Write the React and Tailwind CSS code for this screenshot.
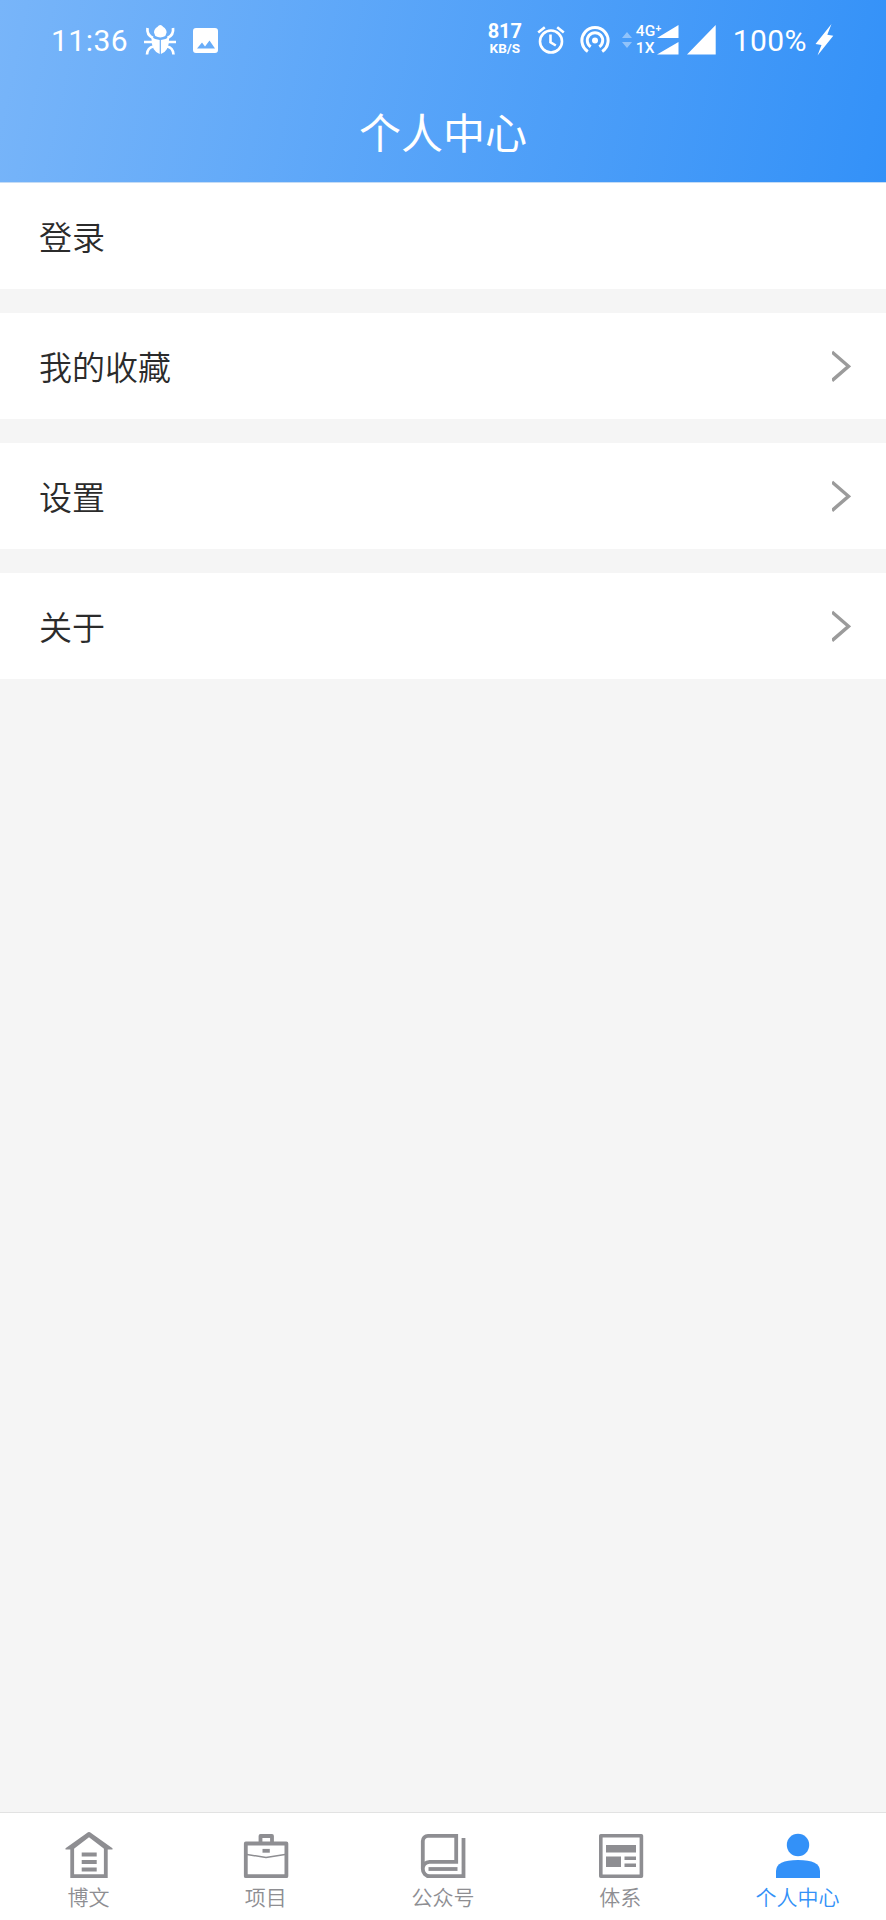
const ROWS = [
  { label: '登录', arrow: false },
  { label: '我的收藏', arrow: true },
  { label: '设置', arrow: true },
  { label: '关于', arrow: true },
]

const TABS = [
  { label: '博文', icon: HomeIcon },
  { label: '项目', icon: CaseIcon },
  { label: '公众号', icon: BookIcon },
  { label: '体系', icon: NewsIcon },
  { label: '个人中心', icon: UserIcon, active: true },
]

export default function App() {
  return (
    <div className="flex h-[1920px] w-[886px] flex-col overflow-hidden bg-[#f5f5f5] font-['Noto_Sans_CJK_SC',sans-serif]">
      <header className="h-[182px] shrink-0 bg-linear-[102deg,#78b5f9,#3391f8] text-white">
        <StatusBar />
        <h1 className="mt-[5px] flex h-[92px] items-center justify-center text-[42px] leading-none">个人中心</h1>
      </header>

      <main className="flex flex-1 flex-col gap-6 border-t border-[#c5dcf5]">
        {ROWS.map((row) => (
          <div key={row.label} className="flex h-[106px] items-center justify-between bg-white pr-[35px] pl-[39px]">
            <span className="pt-px text-[33px] leading-none font-[350] text-[#2b2b2b]">{row.label}</span>
            {row.arrow && <ArrowIcon />}
          </div>
        ))}
      </main>

      <nav className="grid h-[108px] shrink-0 grid-cols-5 border-t border-[#e2e2e2] bg-white">
        {TABS.map((tab) => (
          <Tab key={tab.label} {...tab} />
        ))}
      </nav>
    </div>
  )
}

function Tab({ label, icon: Icon, active }) {
  return (
    <div className={`flex flex-col items-center pt-[19px] ${active ? 'text-[#3391f8]' : 'text-[#8e8e92]'}`}>
      <Icon />
      <span className="mt-[4px] text-[21px] leading-[24px] font-[350]">{label}</span>
    </div>
  )
}

function StatusBar() {
  return (
    <div className="flex h-[80px] items-center justify-between pr-[52px] pl-[51px] font-[Roboto,sans-serif]">
      <div className="flex items-center">
        <span className="w-[93px] pt-[2px] text-[30px] leading-none tracking-[0.5px]">11:36</span>
        <BugIcon />
        <PictureIcon />
      </div>
      <div className="flex items-center">
        <div className="flex w-[36px] flex-col items-center pb-[2px] font-bold">
          <span className="text-[20px] leading-[18px]">817</span>
          <span className="text-[13.5px] leading-[16px]">KB/S</span>
        </div>
        <AlarmIcon />
        <HotspotIcon />
        <DataIcon />
        <div className="flex w-[21px] flex-col text-[15.5px] leading-[17px] font-medium whitespace-nowrap">
          <span>4G⁺</span>
          <span>1X</span>
        </div>
        <SignalIcon />
        <span className="ml-[16px] pt-[2px] text-[30px] leading-none tracking-[0.4px]">100%</span>
        <BoltIcon />
      </div>
    </div>
  )
}

function BugIcon() {
  return (
    <svg className="mr-[1px] h-8 w-8" viewBox="0 0 32 32" fill="currentColor">
      <path d="M10 8.500q0-3.500 3.300-5.500Q16.300-1 19.300 3q3.300 2 3.300 5.500l-1.300 3.500q-5 2.800-10 0zM7.500 13q4 3 8.200 3V30Q7 27 7.500 13zM25.100 13q-4 3-8.200 3V30q8.700-3 8.200-17z" />
      <path d="M3.500 4q-1 7 5.500 10M29 4q1 7-5.500 10M0 18h8M24 18h8M9.500 22.500q-6 1-6.500 8M23 22.500q6 1 6.500 8" fill="none" stroke="currentColor" strokeWidth="2.700" />
    </svg>
  )
}

function PictureIcon() {
  return (
    <svg className="ml-[16px] h-[25px] w-[25px]" viewBox="0 0 25 25">
      <path d="M3 0h19a3 3 0 0 1 3 3v19a3 3 0 0 1-3 3H3a3 3 0 0 1-3-3V3a3 3 0 0 1 3-3zM4 20.500h18l-5.500-8-4.500 6-3-4z" fill="currentColor" fillRule="evenodd" />
    </svg>
  )
}

function AlarmIcon() {
  return (
    <svg className="ml-[14px] h-[28px] w-[28px]" viewBox="0 0 28 28" fill="none" stroke="currentColor" strokeWidth="2.600">
      <circle cx="14" cy="15.500" r="11" />
      <path d="M1.200 6.500 7.800 1.200M26.800 6.500 20.200 1.200M13.500 8.500v7.800l5.300 3.200" />
    </svg>
  )
}

function HotspotIcon() {
  return (
    <svg className="ml-[15px] h-[30px] w-[30px]" viewBox="0 0 30 30" fill="none" stroke="currentColor" strokeWidth="3">
      <path d="M7.800 26.500a13.100 13.100 0 1 1 14.400 0" />
      <path d="M10.700 21.800a7.700 7.700 0 1 1 8.600 0" />
      <circle cx="15" cy="15.500" r="3" fill="currentColor" stroke="none" />
    </svg>
  )
}

function DataIcon() {
  return (
    <svg className="mr-[4px] ml-[12px] h-[16px] w-[10px] opacity-40" viewBox="0 0 10 16" fill="currentColor">
      <path d="M0 6 5 0l5 6zM0 10h10l-5 6z" />
    </svg>
  )
}

function SignalIcon() {
  return (
    <svg className="h-[30px] w-[60px]" viewBox="0 0 60 30" fill="currentColor">
      <path d="M0 13 21.500 0v13zM0 29.500 21.500 17v12.500zM30 29.500 58.700 0v29.500z" />
    </svg>
  )
}

function BoltIcon() {
  return (
    <svg className="ml-[8px] h-[32px] w-[19px]" viewBox="0 0 19 32" fill="currentColor">
      <path d="M16.500 0 .5 20 6.500 21 2.500 31.500 18.300 11.800 12.300 10.800z" />
    </svg>
  )
}

function ArrowIcon() {
  return (
    <svg className="h-[32px] w-[19px]" viewBox="0 0 19 32" fill="none" stroke="#9b9b9b" strokeWidth="3.400">
      <path d="M0 2 16.500 16.300 0 30.600" />
    </svg>
  )
}

function HomeIcon() {
  return (
    <svg className="h-[48px] w-[48px]" viewBox="0 0 48 48" fill="none" stroke="currentColor" strokeWidth="3.800">
      <path d="M7.200 14v30.200h33.600V14" />
      <path d="M.5 16.300 23 .3q1-.5 2 0l22.500 16v1.200H40L24 5.200 8 17.500H.5z" fill="currentColor" stroke="none" />
      <path d="M16.700 22.500h15M16.700 30h15M16.700 37.500h15" />
    </svg>
  )
}

function CaseIcon() {
  return (
    <svg className="ml-px h-[48px] w-[48px]" viewBox="0 0 48 48" fill="none" stroke="currentColor" strokeWidth="3.800" strokeLinejoin="round">
      <rect x="3.800" y="11.500" width="40.600" height="32.700" />
      <path d="M18.500 11V4h11.500v7" />
      <path d="M20.500 18.800h7.300" />
      <path d="M5 22.500 24 25.500 43 22.500" strokeWidth="1.500" />
    </svg>
  )
}

function BookIcon() {
  return (
    <svg className="ml-px h-[48px] w-[48px]" viewBox="0 0 48 48" fill="none" stroke="currentColor" strokeWidth="3.800">
      <path d="M3.800 37V9a5.200 5.200 0 0 1 5.200-5.200h28.200v26H10.500a6.700 6.700 0 0 0-6.700 7.200 7 7 0 0 0 7 7.200h33.700V6" />
      <path d="M9.500 37h29" />
    </svg>
  )
}

function NewsIcon() {
  return (
    <svg className="ml-px h-[48px] w-[48px]" viewBox="0 0 48 48" fill="none" stroke="currentColor" strokeWidth="3.600" strokeLinejoin="round">
      <rect x="3.800" y="3.800" width="40.600" height="40.400" />
      <path d="M9 13h30v7.500H9zM9 24.500h15V35H9zM27.500 24.500H39V28H27.500zM27.500 31.500H39V35H27.500z" fill="currentColor" stroke="none" />
    </svg>
  )
}

function UserIcon() {
  return (
    <svg className="ml-[2px] h-[48px] w-[48px]" viewBox="0 0 48 48" fill="currentColor">
      <circle cx="24" cy="13" r="11.200" />
      <path d="M2 46V39Q2 28 24 28t22 11v7z" />
    </svg>
  )
}
